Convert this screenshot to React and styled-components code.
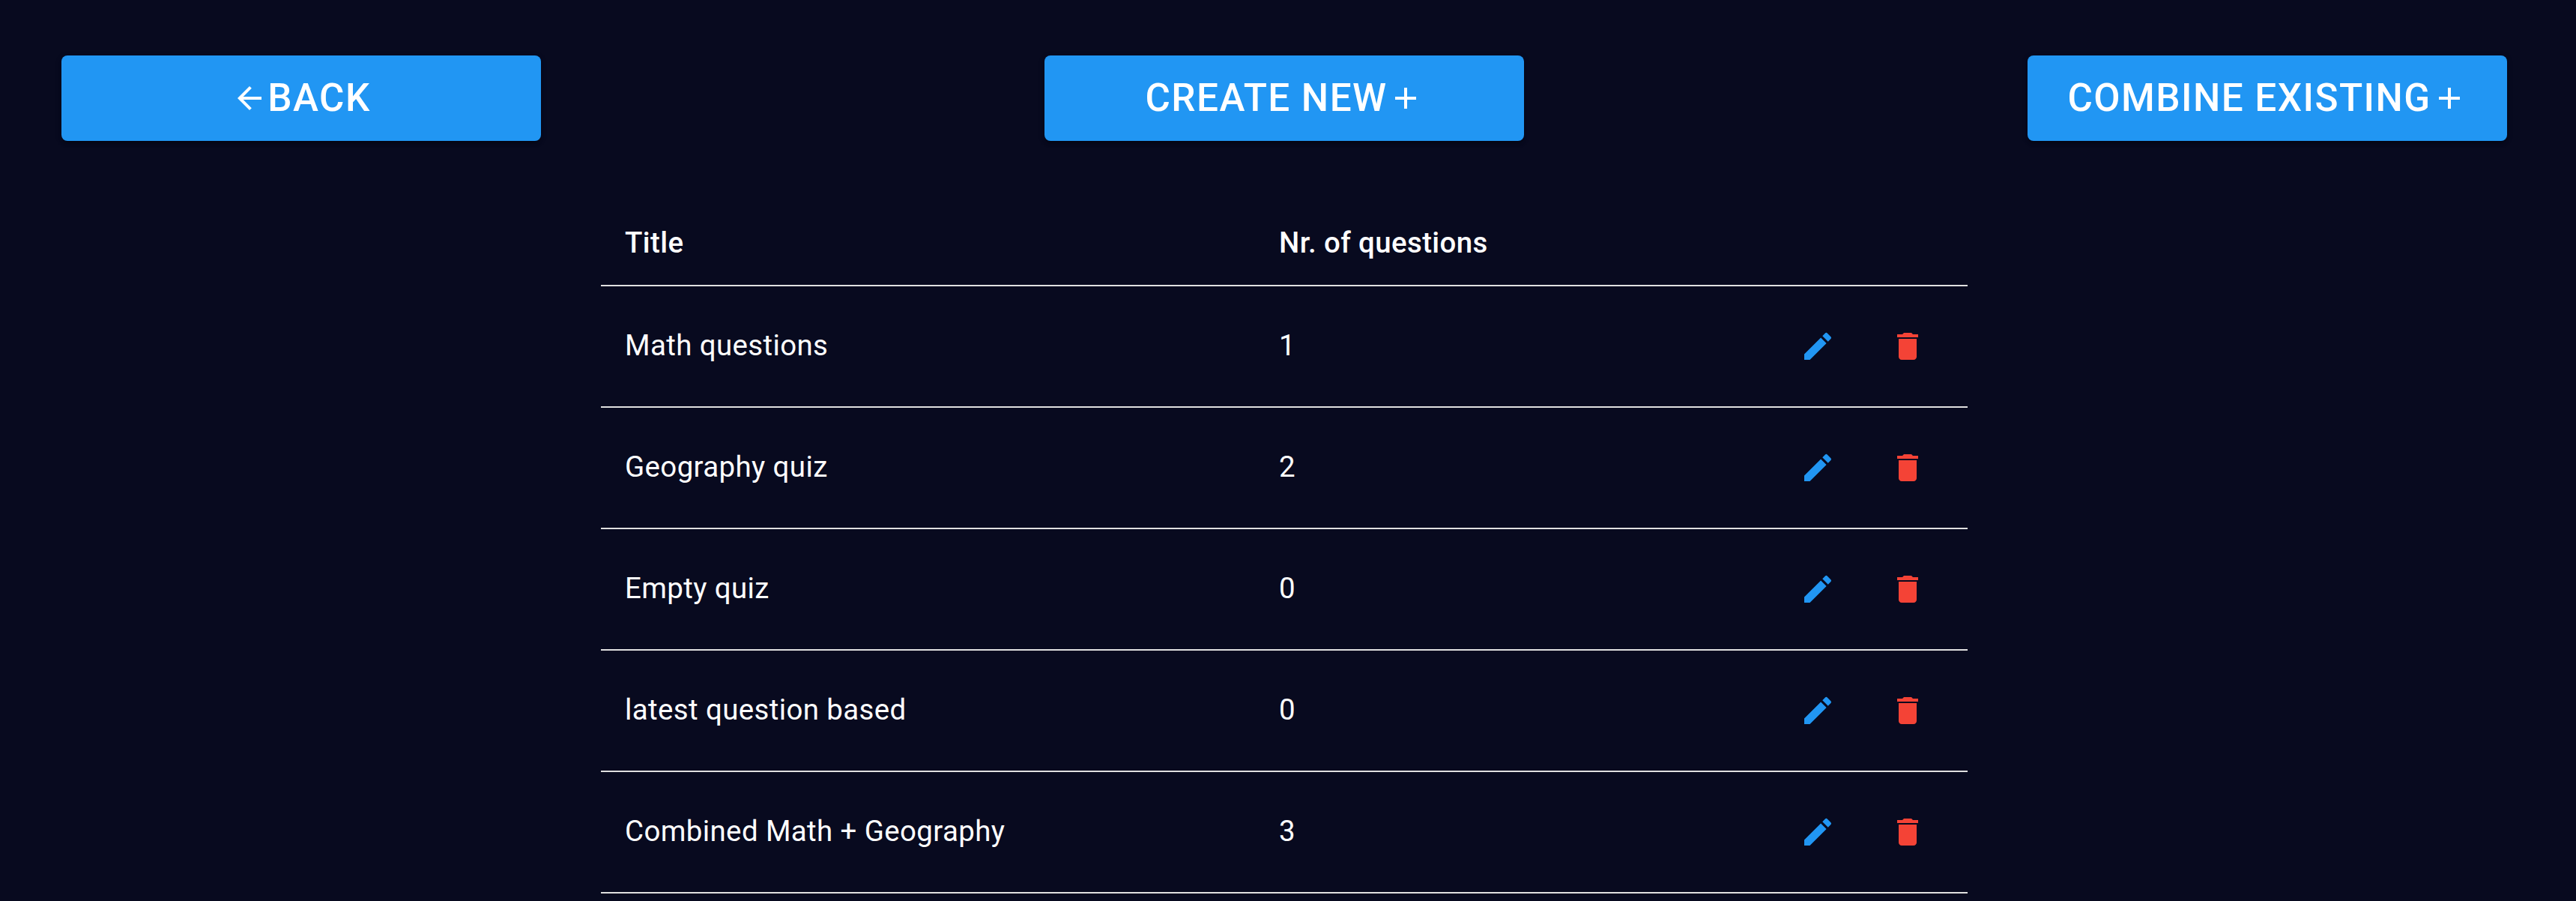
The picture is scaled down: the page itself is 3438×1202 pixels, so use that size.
import React from "react";
import styled, { createGlobalStyle } from "styled-components";
import { MdAdd, MdArrowBack, MdDelete, MdEdit } from "react-icons/md";

const GlobalStyle = createGlobalStyle`
  *, *::before, *::after { box-sizing: border-box; }
  body {
    margin: 0;
    background: #080a1f;
    color: #fff;
    font-family: Roboto, "Liberation Sans", sans-serif;
    overflow: hidden;
  }
`;

const Page = styled.main`
  display: flex;
  flex-direction: column;
  gap: 80px;
  height: 1202px;
  padding: 74px 92px 0 82px;
  overflow: hidden;
`;

const Toolbar = styled.nav`
  display: flex;
  justify-content: space-between;
`;

const ActionButton = styled.button`
  display: flex;
  align-items: center;
  justify-content: center;
  width: 640px;
  height: 114px;
  padding: 0;
  border: 0;
  border-radius: 8px;
  background: #2196f3;
  color: #fff;
  font: 500 51.2px/61px Roboto, "Liberation Sans", sans-serif;
  letter-spacing: 0.02857em;
  text-transform: uppercase;
  white-space: nowrap;
  cursor: pointer;
  box-shadow:
    0 6px 2px -4px rgba(0, 0, 0, 0.2),
    0 4px 4px 0 rgba(0, 0, 0, 0.14),
    0 2px 10px 0 rgba(0, 0, 0, 0.12);

  svg {
    flex: none;
    width: 48px;
    height: 48px;
  }
`;

const ButtonLabel = styled.span`
  padding-bottom: 1px;
`;

const Table = styled.div`
  align-self: center;
  width: 1824px;
`;

const Row = styled.div`
  display: grid;
  grid-template-columns: 873px 1fr auto;
  align-items: center;
  height: ${({ $head }) => ($head ? 114 : 162)}px;
  border-bottom: 2px solid #e0e0e0;
  font-size: 38.4px;
  font-weight: ${({ $head }) => ($head ? 500 : 400)};
  line-height: 45px;
  letter-spacing: 0.01071em;
`;

const Cell = styled.div`
  padding: 0 32px ${({ $head }) => ($head ? 1 : 3)}px;
`;

const Actions = styled.div`
  display: flex;
  gap: 24px;
  padding-right: 32px;
`;

const IconButton = styled.button`
  display: flex;
  align-items: center;
  justify-content: center;
  width: 96px;
  height: 96px;
  padding: 0;
  border: 0;
  border-radius: 50%;
  background: transparent;
  color: ${({ $danger }) => ($danger ? "#f44336" : "#2196f3")};
  cursor: pointer;

  svg {
    width: 48px;
    height: 48px;
  }
`;

const quizzes = [
  { title: "Math questions", count: 1 },
  { title: "Geography quiz", count: 2 },
  { title: "Empty quiz", count: 0 },
  { title: "latest question based", count: 0 },
  { title: "Combined Math + Geography", count: 3 },
];

export default function App() {
  return (
    <>
      <GlobalStyle />
      <Page>
        <Toolbar>
          <ActionButton>
            <MdArrowBack />
            <ButtonLabel>Back</ButtonLabel>
          </ActionButton>
          <ActionButton>
            <ButtonLabel>Create new</ButtonLabel>
            <MdAdd />
          </ActionButton>
          <ActionButton>
            <ButtonLabel>Combine existing</ButtonLabel>
            <MdAdd />
          </ActionButton>
        </Toolbar>
        <Table>
          <Row $head>
            <Cell $head>Title</Cell>
            <Cell $head>Nr. of questions</Cell>
          </Row>
          {quizzes.map(({ title, count }) => (
            <Row key={title}>
              <Cell>{title}</Cell>
              <Cell>{count}</Cell>
              <Actions>
                <IconButton aria-label="Edit">
                  <MdEdit />
                </IconButton>
                <IconButton $danger aria-label="Delete">
                  <MdDelete />
                </IconButton>
              </Actions>
            </Row>
          ))}
        </Table>
      </Page>
    </>
  );
}
